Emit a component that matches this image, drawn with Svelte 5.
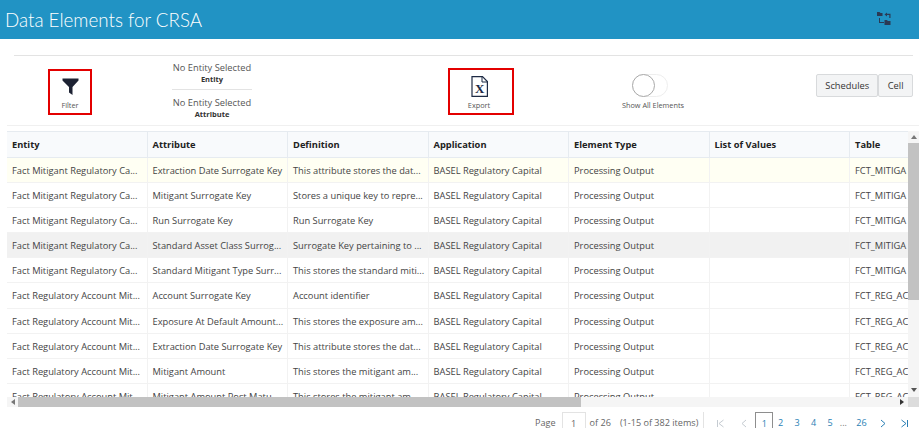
<script>
    const columns = ['Entity', 'Attribute', 'Definition', 'Application', 'Element Type', 'List of Values', 'Table'];

    const mitigant = 'Fact Mitigant Regulatory Ca...';
    const account = 'Fact Regulatory Account Mit...';

    // rows as they show on the first page of the grid
    const rows = [
        [mitigant, 'Extraction Date Surrogate Key', 'This attribute stores the dat...', 'FCT_MITIGA'],
        [mitigant, 'Mitigant Surrogate Key', 'Stores a unique key to repre...', 'FCT_MITIGA'],
        [mitigant, 'Run Surrogate Key', 'Run Surrogate Key', 'FCT_MITIGA'],
        [mitigant, 'Standard Asset Class Surrog...', 'Surrogate Key pertaining to ...', 'FCT_MITIGA'],
        [mitigant, 'Standard Mitigant Type Surr...', 'This stores the standard miti...', 'FCT_MITIGA'],
        [account, 'Account Surrogate Key', 'Account identifier', 'FCT_REG_AC'],
        [account, 'Exposure At Default Amount...', 'This stores the exposure am...', 'FCT_REG_AC'],
        [account, 'Extraction Date Surrogate Key', 'This attribute stores the dat...', 'FCT_REG_AC'],
        [account, 'Mitigant Amount', 'This stores the mitigant am...', 'FCT_REG_AC'],
        [account, 'Mitigant Amount Post Matu...', 'This stores the mitigant am...', 'FCT_REG_AC']
    ];

    const pages = ['2', '3', '4', '5'];
</script>

<div class="page">
    <header class="topbar">
        <h1>Data Elements for CRSA</h1>
        <svg class="tree" width="15" height="15" viewBox="0 0 15 15" aria-hidden="true">
            <path fill="#2b3a55" d="M1 1h2.500l1 1H6.500v3H1zM8.500 3.500 11 1.500v1.300h3.500V7h-1.200V4H11v1.500zM8.500 9h2.500l.8 1H14.500v4H8.500z" />
            <path fill="none" stroke="#2b3a55" d="M3.500 7v5M3.500 11.500H8" />
        </svg>
    </header>

    <div class="rule"></div>

    <section class="tools">
        <div class="tool filter">
            <svg width="17" height="17" viewBox="0 0 17 17" aria-hidden="true">
                <path fill="#1d2233" d="M0.500 0.500h16v2L10.500 9v8l-3.500-2.500V9L0.500 2.500z" />
            </svg>
            <span>Filter</span>
        </div>

        <div class="selection">
            <div class="pick">
                <span>No Entity Selected</span>
                <b>Entity</b>
            </div>
            <div class="pick second">
                <span>No Entity Selected</span>
                <b>Attribute</b>
            </div>
        </div>

        <div class="tool export">
            <svg width="17" height="21" viewBox="0 0 17 21" aria-hidden="true">
                <path fill="#fff" stroke="#1d2a44" stroke-width="1.200" d="M1 .6h10.500L16.400 5.500V20.400H1z" />
                <path fill="none" stroke="#1d2a44" d="M11 .6V6h5.400" />
                <text x="8.600" y="17" text-anchor="middle" class="xl">X</text>
            </svg>
            <span>Export</span>
        </div>

        <div class="show-all">
            <div class="toggle"><div class="knob"></div></div>
            <span>Show All Elements</span>
        </div>

        <div class="switcher">
            <button class="schedules">Schedules</button>
            <button>Cell</button>
        </div>
    </section>

    <section class="grid">
        <div class="viewport">
            <div class="row head">
                {#each columns as col}
                    <div class="cell">{col}</div>
                {/each}
            </div>
            {#each rows as row, i}
                <div class="row" class:current={i === 0} class:hover={i === 3}>
                    <div class="cell">{row[0]}</div>
                    <div class="cell">{row[1]}</div>
                    <div class="cell">{row[2]}</div>
                    <div class="cell">BASEL Regulatory Capital</div>
                    <div class="cell">Processing Output</div>
                    <div class="cell"></div>
                    <div class="cell">{row[3]}</div>
                </div>
            {/each}
        </div>

        <div class="vbar">
            <div class="arrow up"></div>
            <div class="vthumb"></div>
            <div class="arrow down"></div>
        </div>

        <div class="hbar">
            <div class="arrow left"></div>
            <div class="hthumb"></div>
            <div class="arrow right"></div>
        </div>
        <div class="corner"></div>
    </section>

    <footer class="pager">
        <span>Page</span>
        <div class="page-input">1</div>
        <span>of 26</span>
        <span class="range">(1-15 of 382 items)</span>
        <div class="pager-links">
            <span class="nav off first-nav">
                <svg width="9" height="9" viewBox="0 0 9 9"><path d="M1.500 1v7M7.500 1 3 4.500 7.500 8" /></svg>
            </span>
            <span class="nav off prev-nav">
                <svg width="9" height="9" viewBox="0 0 9 9"><path d="M6 1 2 4.500 6 8" /></svg>
            </span>
            <span class="current-page">1</span>
            {#each pages as p}
                <span class="num">{p}</span>
            {/each}
            <span class="dots">...</span>
            <span class="num last-num">26</span>
            <span class="nav next-nav">
                <svg width="9" height="9" viewBox="0 0 9 9"><path d="M3 1l4 3.500L3 8" /></svg>
            </span>
            <span class="nav last-nav">
                <svg width="9" height="9" viewBox="0 0 9 9"><path d="M1.500 1 6 4.500 1.500 8M7.500 1v7" /></svg>
            </span>
        </div>
    </footer>
</div>

<style>
    :global(body) {
        margin: 0;
        background: #fff;
        overflow: hidden;
    }

    .page {
        width: 919px;
        height: 428px;
        overflow: hidden;
        font-family: 'Open Sans', 'Noto Sans', sans-serif;
        color: #333;
    }

    .topbar {
        height: 39px;
        background: #2193c4;
        display: flex;
        align-items: center;
        justify-content: space-between;
        padding: 0 28px 0 5px;
    }

    .topbar h1 {
        margin: 0;
        font-family: 'Lato', 'Open Sans', sans-serif;
        font-size: 18.800px;
        font-weight: 300;
        color: #fff;
        white-space: nowrap;
    }

    .tree {
        margin-top: -2px;
    }

    .rule {
        height: 1px;
        background: #e3e3e3;
        margin: 16px 6px 0 14px;
    }

    .tools {
        height: 69px;
        margin-left: 7px;
        padding-left: 41px;
        padding-right: 6px;
        border-bottom: 1px solid #f0f0f0;
        display: flex;
        align-items: flex-start;
    }

    .tool {
        box-sizing: border-box;
        border: 2px solid #e30000;
        display: flex;
        flex-direction: column;
        align-items: center;
        font-size: 7.300px;
        color: #555;
    }

    .filter {
        width: 44px;
        height: 46px;
        margin-top: 13px;
        padding-top: 7px;
        gap: 5px;
    }

    .export {
        width: 66px;
        height: 47px;
        margin-top: 12px;
        margin-left: 196px;
        padding: 6px 4px 0 0;
        gap: 3px;
    }

    .xl {
        font-family: 'Liberation Serif', serif;
        font-weight: 700;
        font-size: 13px;
        fill: #1d2a44;
    }

    .selection {
        width: 80px;
        margin-left: 80px;
        margin-top: 6px;
        text-align: center;
    }

    .pick {
        display: flex;
        flex-direction: column;
        font-size: 9.300px;
        line-height: 11px;
        height: 27px;
        color: #555;
        white-space: nowrap;
    }

    .pick b {
        margin-top: 1px;
        font-size: 7.500px;
        font-weight: 700;
        color: #333;
    }

    .second {
        border-top: 1px solid #e3e3e3;
        padding-top: 7px;
    }

    .show-all {
        width: 62px;
        margin-left: 108px;
        margin-top: 18px;
        display: flex;
        flex-direction: column;
        align-items: center;
        gap: 3px;
        font-size: 7.300px;
        color: #555;
        white-space: nowrap;
    }

    .toggle {
        box-sizing: border-box;
        width: 36px;
        height: 23px;
        margin-right: 6px;
        border: 1px solid #eeeeee;
        border-radius: 12px;
        background: #fff;
    }

    .knob {
        box-sizing: border-box;
        width: 23px;
        height: 23px;
        margin: -1px 0 0 -1px;
        border-radius: 50%;
        background: #fff;
        border: 1px solid #a9a9a9;
    }

    .switcher {
        margin-left: auto;
        margin-top: 18px;
        display: flex;
    }

    .switcher button {
        height: 23px;
        padding: 0 8.500px;
        font-family: inherit;
        font-size: 9.300px;
        color: #333;
        background: #f3f4f5;
        border: 1px solid #d8dadc;
        border-radius: 2px;
    }

    .switcher .schedules {
        width: 62px;
        padding: 0;
    }

    .grid {
        margin: 5px 0 0 7px;
        width: 912px;
        height: 276px;
        display: grid;
        grid-template-columns: 901px 11px;
        grid-template-rows: 266px 10px;
    }

    .viewport {
        overflow: hidden;
        border-top: 1px solid #e6ebf0;
        box-sizing: border-box;
    }

    .row {
        display: grid;
        grid-template-columns: repeat(6, 140.500px) 58px;
        height: 25.100px;
        box-sizing: border-box;
        border-bottom: 1px solid #f2f2f2;
        font-size: 9.300px;
        line-height: 25px;
        color: #444;
    }

    .cell {
        box-sizing: border-box;
        padding-left: 5px;
        border-right: 1px solid #f2f2f2;
        white-space: nowrap;
        overflow: hidden;
    }

    .cell:last-child {
        border-right: 0;
    }

    .head {
        height: 26px;
        background: #f8fafc;
        border-bottom: 1px solid #e6ebf0;
        font-weight: 700;
        color: #222;
    }

    .head .cell {
        border-right-color: #e6ebf0;
    }

    .current {
        background: #fffff3;
    }

    .hover {
        background: #f1f1f1;
    }

    .vbar {
        background: #f5f5f5;
        display: flex;
        flex-direction: column;
        align-items: center;
    }

    .vthumb {
        width: 100%;
        height: 157px;
        background: #c2c2c2;
    }

    .hbar {
        background: #f5f5f5;
        display: flex;
        align-items: center;
    }

    .hthumb {
        width: 563px;
        height: 100%;
        background: #c2c2c2;
    }

    .corner {
        background: #dcdcdc;
    }

    .arrow {
        flex: none;
        width: 0;
        height: 0;
        border: 3px solid transparent;
    }

    .up {
        border-bottom: 4px solid #777;
        border-top: 0;
        margin: 4px 0 4px;
    }

    .down {
        border-top: 4px solid #555;
        border-bottom: 0;
        margin-top: auto;
        margin-bottom: 5px;
    }

    .left {
        border-right: 4px solid #777;
        border-left: 0;
        margin: 0 3px 0 4px;
    }

    .right {
        border-left: 4px solid #333;
        border-right: 0;
        margin-left: auto;
        margin-right: 4px;
    }

    .pager {
        height: 22px;
        margin-top: 5px;
        display: flex;
        align-items: flex-start;
        padding-left: 535px;
        font-size: 9.100px;
        line-height: 22px;
        color: #666;
        white-space: nowrap;
    }

    .page-input {
        box-sizing: border-box;
        width: 24px;
        height: 24px;
        margin: 0 4px 0 6px;
        border: 1px solid #e3e3e3;
        text-align: center;
    }

    .range {
        margin-left: 9px;
        padding-right: 5px;
        border-right: 1px solid #e3e3e3;
    }

    .pager-links {
        display: flex;
        align-items: flex-start;
        color: #2a7fb5;
    }

    .pager-links span {
        flex: none;
        text-align: center;
    }

    .nav {
        display: flex;
        align-items: center;
        justify-content: center;
        height: 22px;
    }

    .nav svg {
        fill: none;
        stroke: #2a7fb5;
        stroke-width: 1;
    }

    .off svg {
        stroke: #c5cbd1;
    }

    .first-nav {
        width: 9px;
        margin-left: 12px;
    }

    .prev-nav {
        width: 9px;
        margin-left: 15px;
    }

    .current-page {
        box-sizing: border-box;
        width: 18px;
        height: 24px;
        margin-left: 6px;
        margin-right: -1px;
        border: 1px solid #8e8e8e;
        color: #2a7fb5;
    }

    .num {
        width: 16.500px;
    }

    .dots {
        width: 10px;
        color: #777;
    }

    .last-num {
        width: 20px;
        margin-left: 3px;
    }

    .next-nav {
        width: 9px;
        margin-left: 7px;
    }

    .last-nav {
        width: 9px;
        margin-left: 13px;
    }
</style>
